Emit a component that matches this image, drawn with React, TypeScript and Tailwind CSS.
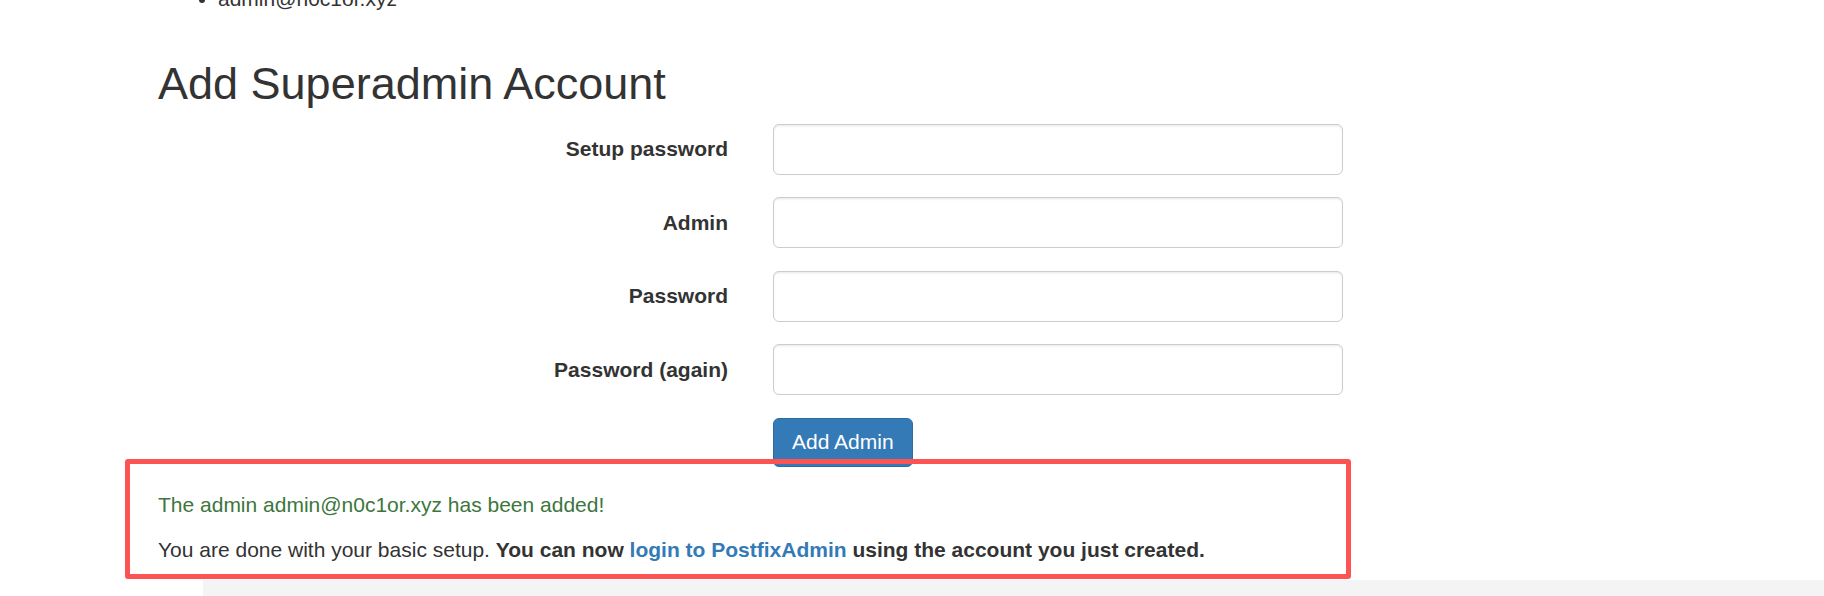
import React from "react";

const labels = ["Setup password", "Admin", "Password", "Password (again)"];

export default function App() {
  return (
    <div
      className="relative w-[1824px] h-[596px] overflow-hidden bg-white text-[#333333] text-[21px] leading-[30px]"
      style={{ fontFamily: '"Liberation Sans", Arial, Helvetica, sans-serif' }}
    >
      <div className="pl-[158px]">
        <ul className="list-disc pl-[60px] -mt-[16px] mb-[15px]">
          <li>admin@n0c1or.xyz</li>
        </ul>
        <h2 className="mt-[45px] mb-[15px] text-[45px] leading-[49.5px] font-normal">
          Add Superadmin Account
        </h2>
        <form className="flex flex-col" onSubmit={(e) => e.preventDefault()}>
          {labels.map((l) => (
            <div key={l} className="flex items-start gap-[45px] mb-[22.5px]">
              <label className="w-[570px] text-right font-bold pt-[10.5px]">{l}</label>
              <input
                type={l === "Admin" ? "text" : "password"}
                className="w-[570px] h-[51px] rounded-[6px] border border-[#cccccc] bg-white px-[18px] shadow-[inset_0_1.5px_1.5px_rgba(0,0,0,0.075)] outline-none"
              />
            </div>
          ))}
          <div className="flex gap-[45px] mb-[23px]">
            <div className="w-[570px]" />
            <button
              type="submit"
              className="h-[49px] px-[18px] rounded-[6px] border-[1.5px] border-[#2e6da4] bg-[#337ab7] text-white text-[21px] leading-[30px]"
            >
              Add Admin
            </button>
          </div>
        </form>
        <p className="text-[#3c763d] mb-[15px]">The admin admin@n0c1or.xyz has been added!</p>
        <p className="mb-[15px]">
          You are done with your basic setup.{" "}
          <b>
            You can now <a className="text-[#337ab7]" href="#">login to PostfixAdmin</a> using the account you
            just created.
          </b>
        </p>
      </div>
      <div className="ml-[203px] h-[20px] bg-[#f4f4f4]" />
      <div className="absolute left-[125px] top-[459px] w-[1226px] h-[120px] border-[5.5px] border-[#fe5353] rounded-[3px] pointer-events-none" />
    </div>
  );
}
